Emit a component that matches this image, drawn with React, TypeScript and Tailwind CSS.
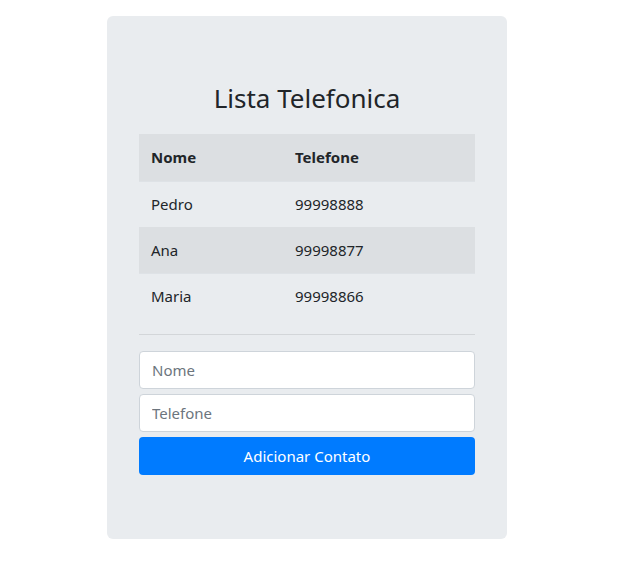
import React from "react";

const rows = [
  { nome: "Pedro", tel: "99998888" },
  { nome: "Ana", tel: "99998877" },
  { nome: "Maria", tel: "99998866" },
];

export default function App() {
  return (
    <div className="min-h-[576px] w-full bg-white pt-4 text-[#212529]" style={{ fontFamily: '"Noto Sans", "Open Sans", sans-serif' }}>
      <div className="ml-[107px] w-[400px] rounded-md bg-[#e9ecef] px-8 pt-[64px] pb-[64px]">
        <h3 className="h-[54px] text-center text-[26px] leading-[36px] font-normal">Lista Telefonica</h3>
        <table className="w-full border-collapse text-[15px]">
          <thead>
            <tr className="bg-[#dcdfe2]">
              <th className="h-[47px] w-[144px] px-3 text-left font-bold">Nome</th>
              <th className="h-[47px] px-3 text-left font-bold">Telefone</th>
            </tr>
          </thead>
          <tbody>
            {rows.map((r, i) => (
              <tr key={r.nome} className={i % 2 === 1 ? "bg-[#dcdfe2]" : "border-t border-[#dee2e6]"}>
                <td className="h-[46px] px-3">{r.nome}</td>
                <td className="h-[46px] px-3">{r.tel}</td>
              </tr>
            ))}
          </tbody>
        </table>
        <hr className="mt-[15px] mb-4 border-t border-[#d3d6d9]" />
        <div className="flex flex-col gap-[5px]">
          <input
            placeholder="Nome"
            className="h-[38px] w-full rounded border border-[#ced4da] bg-white px-3 text-[15px] text-[#495057] placeholder:text-[#6c757d] outline-none"
          />
          <input
            placeholder="Telefone"
            className="h-[38px] w-full rounded border border-[#ced4da] bg-white px-3 text-[15px] text-[#495057] placeholder:text-[#6c757d] outline-none"
          />
          <button className="h-[38px] w-full rounded bg-[#007bff] text-[15px] text-white">Adicionar Contato</button>
        </div>
      </div>
    </div>
  );
}
